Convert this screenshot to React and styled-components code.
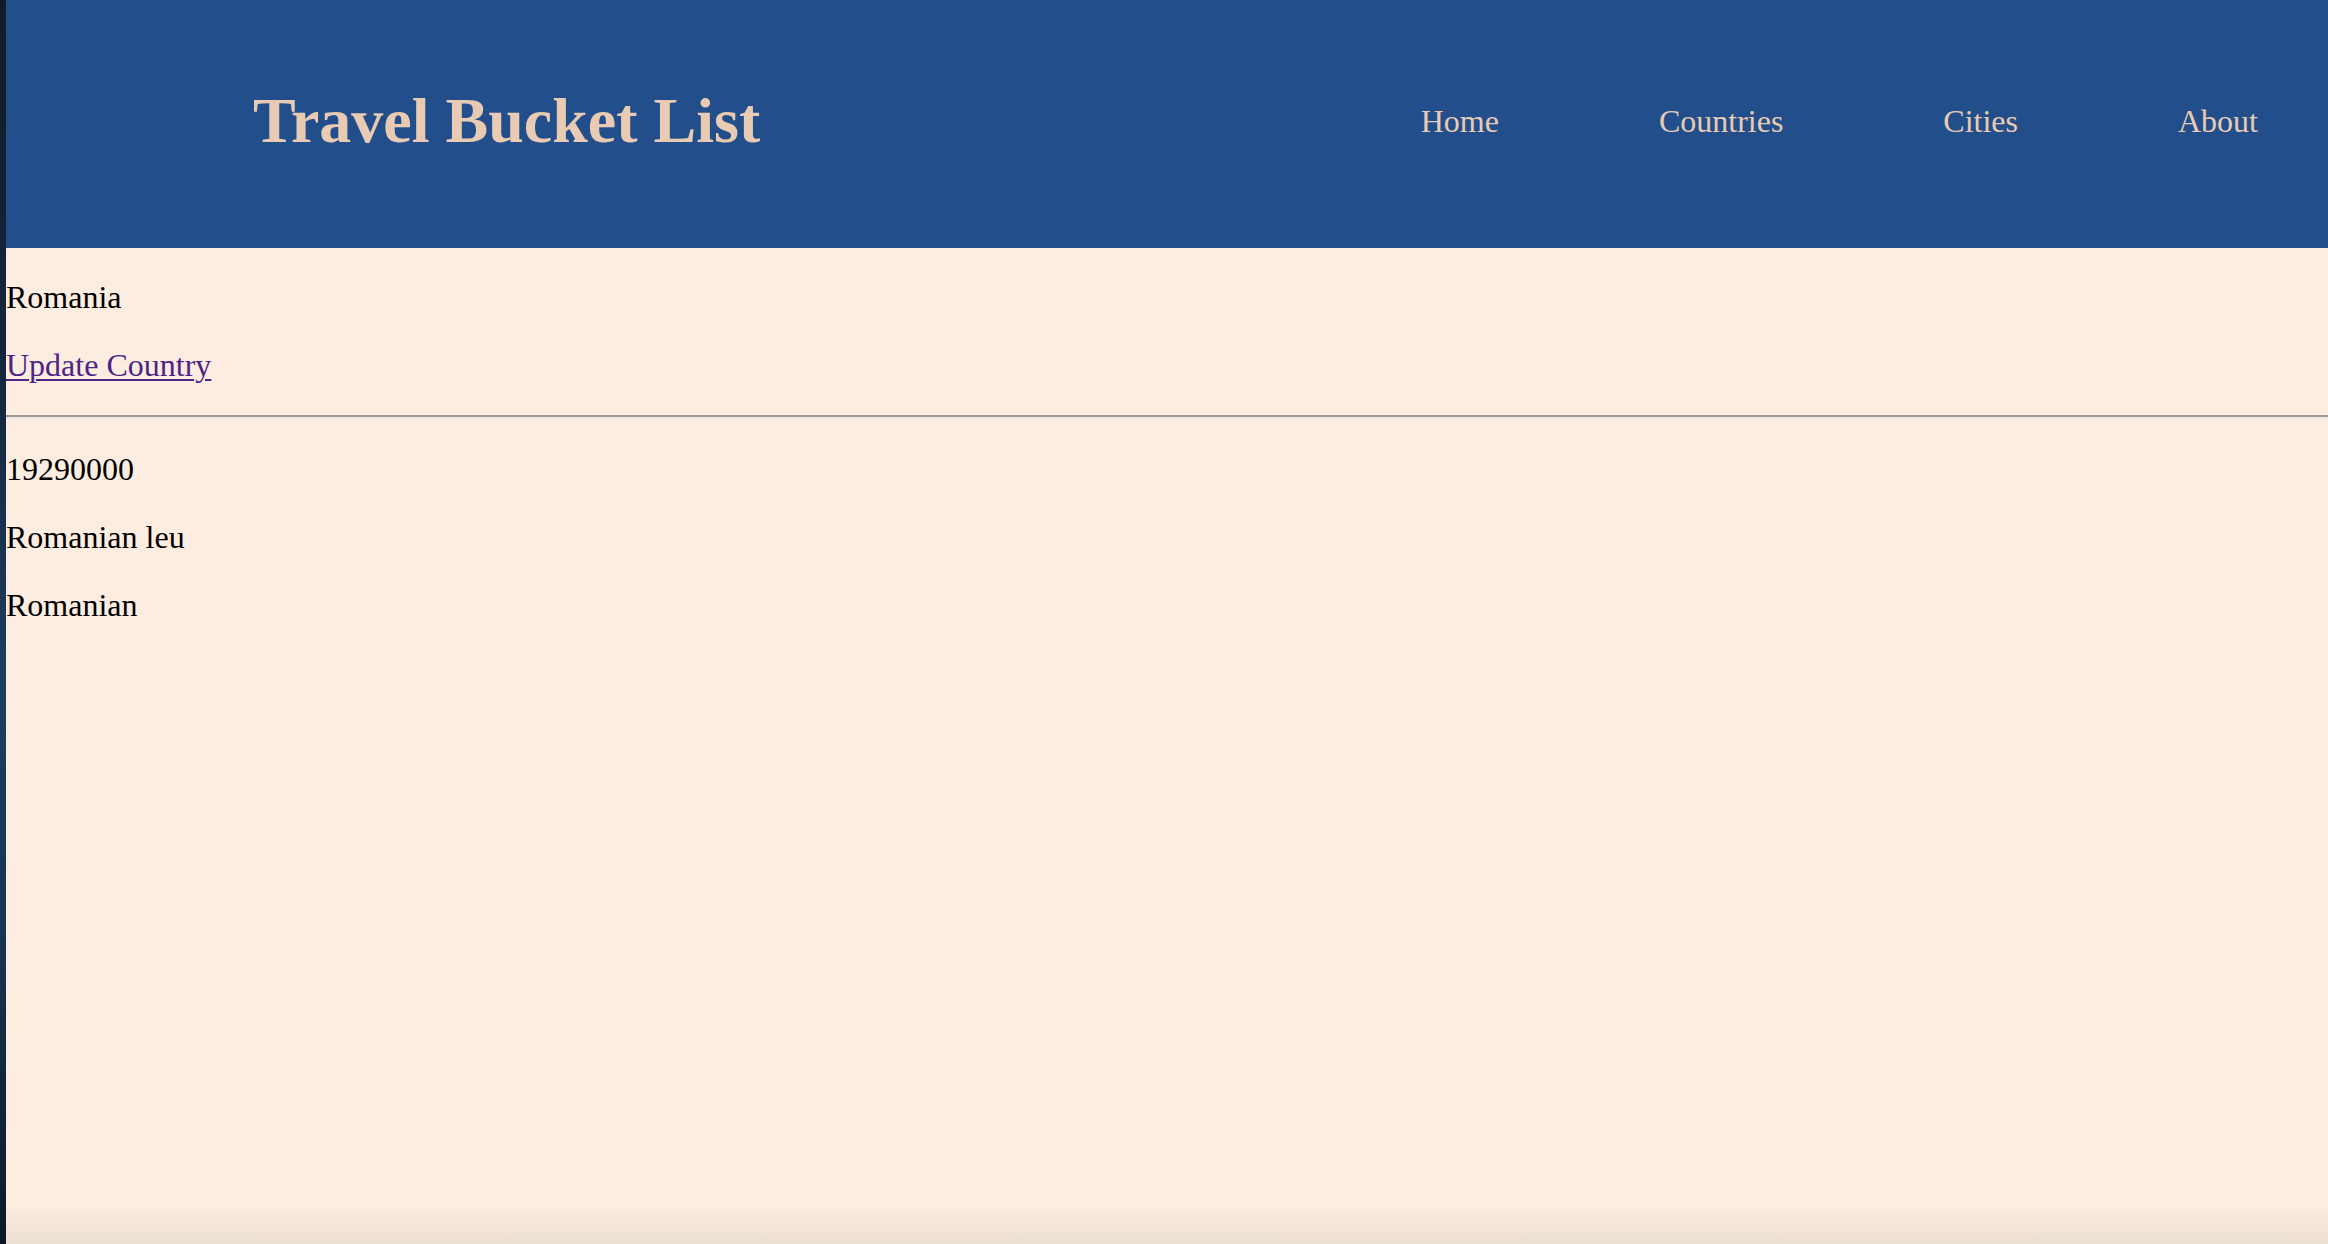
import React from 'react';
import styled, { createGlobalStyle } from 'styled-components';

const GlobalStyle = createGlobalStyle`
  html, body {
    margin: 0;
    padding: 0;
  }
  body {
    font-family: "Liberation Serif", "Times New Roman", serif;
    background: #fdece0;
  }
`;

const Page = styled.div`
  display: flex;
  min-height: 100vh;
`;

// sliver of desktop showing at the left of the browser window
const DesktopEdge = styled.div`
  width: 6px;
  flex: none;
  background: linear-gradient(
    180deg,
    #111b2b 0%,
    #15263d 30%,
    #1c3e5e 55%,
    #173452 75%,
    #0d1827 100%
  );
`;

const Main = styled.div`
  flex: 1;
  display: flex;
  flex-direction: column;
  background: linear-gradient(
    180deg,
    #fdece0 0%,
    #fdece0 calc(100% - 40px),
    #ecdfd3 100%
  );
`;

const Header = styled.header`
  box-sizing: border-box;
  height: 248px;
  padding: 0 70px 6px 247px;
  display: flex;
  align-items: center;
  justify-content: space-between;
  background: #224f8c;
  color: #e9cbb3;
`;

const Title = styled.h1`
  margin: 0;
  font-size: 64px;
  font-weight: bold;
`;

const Nav = styled.nav`
  display: flex;
  gap: 160px;
`;

const NavLink = styled.a`
  font-size: 32px;
  color: #e9cbb3;
  text-decoration: none;
`;

const Content = styled.main`
  flex: 1;
  padding-top: 0;
  font-size: 32px;
  line-height: 36px;
  color: #000;
`;

const Line = styled.p`
  margin: 32px 0;
  &:first-child {
    margin-top: 31px;
  }
`;

const UpdateLink = styled.a`
  color: #4d2588;
  text-decoration: underline;
  text-decoration-thickness: 2px;
  text-underline-offset: 3px;
`;

const Divider = styled.hr`
  margin: 31px 0 32px;
  height: 0;
  border: none;
  border-top: 2px solid #9a9a9a;
  border-bottom: 2px solid #eee7e1;
`;

const country = {
  name: 'Romania',
  population: 19290000,
  currency: 'Romanian leu',
  language: 'Romanian',
};

export default function App() {
  const links = ['Home', 'Countries', 'Cities', 'About'];
  return (
    <>
      <GlobalStyle />
      <Page>
        <DesktopEdge />
        <Main>
          <Header>
            <Title>Travel Bucket List</Title>
            <Nav>
              {links.map(l => (
                <NavLink key={l} href="#">
                  {l}
                </NavLink>
              ))}
            </Nav>
          </Header>
          <Content>
            <Line>{country.name}</Line>
            <Line>
              <UpdateLink href="#">Update Country</UpdateLink>
            </Line>
            <Divider />
            <Line>{country.population}</Line>
            <Line>{country.currency}</Line>
            <Line>{country.language}</Line>
          </Content>
        </Main>
      </Page>
    </>
  );
}
